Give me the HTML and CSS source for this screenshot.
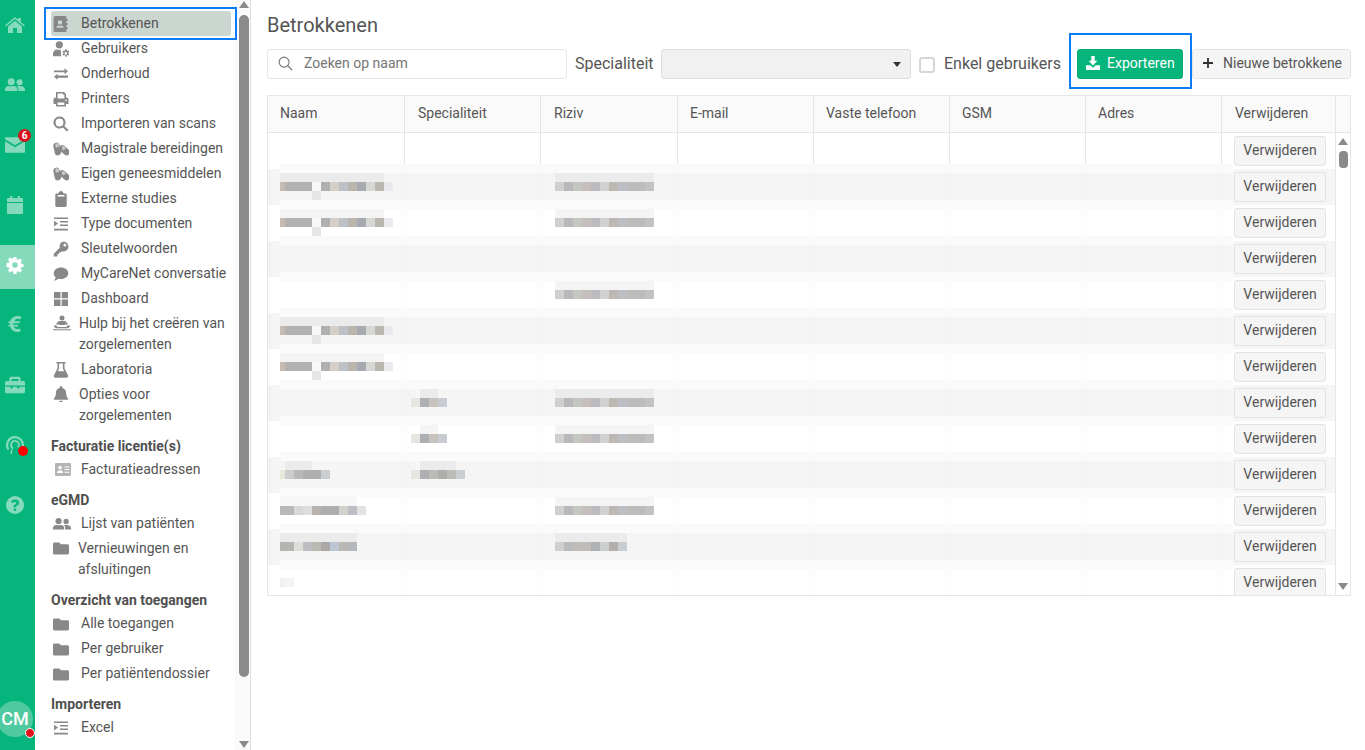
FILE: index.html
```html
<!DOCTYPE html>
<html lang="nl">
<head>
<meta charset="utf-8">
<title>Betrokkenen</title>
<link rel="stylesheet" href="styles.css">
</head>
<body>
<svg class="sprite" xmlns="http://www.w3.org/2000/svg">
  <symbol id="i-book" viewBox="0 0 16 16"><path fill-rule="evenodd" d="M2 0h10a1.5 1.5 0 0 1 1.5 1.5V3h1v2h-1v2h1v2h-1v2h1v2h-1v1.500A1.500 1.500 0 0 1 12 16H2A1.500 1.500 0 0 1 .5 14.500v-13A1.500 1.500 0 0 1 2 0zm5 4.200a2.200 2.200 0 1 0 0 4.400 2.200 2.200 0 0 0 0-4.400zM3.200 11.800h7.600c0-1.500-1.300-2.400-2.300-2.400-.5 0-.8.300-1.500.3s-1-.3-1.500-.3c-1 0-2.300.9-2.300 2.400z"/></symbol>
  <symbol id="i-usercog" viewBox="0 0 16 16"><circle cx="6.300" cy="3.800" r="3.600"/><path d="M0 15.200v-2.200C0 10.500 2 8.600 4.200 8.600c.7 0 1.200.3 2.100.3.600 0 1.100-.1 1.600-.3-.3 1-.2 2 .4 2.800-.6 1-.7 2.800.5 3.800H0z"/><path fill-rule="evenodd" d="M12.500 7.900l1.100.3.100 1.100 1 .6 1-.4.600 1.100-.8.800v1.100l.8.800-.6 1.100-1-.4-1 .6-.1 1.100h-1.300l-.2-1.100-1-.6-1 .4-.6-1.100.8-.8v-1.100l-.8-.8.6-1.100 1 .4 1-.6.2-1.400zm.3 3.200a1.300 1.300 0 1 0 0 2.600 1.300 1.300 0 0 0 0-2.600z"/></symbol>
  <symbol id="i-exchange" viewBox="0 0 16 16"><path d="M1 4.500h10.500V2.300L15 5.300l-3.500 3V6.300H1zM15 9.500H4.500V7.700L1 10.700l3.500 3v-2H15z"/></symbol>
  <symbol id="i-print" viewBox="0 0 16 16"><path fill-rule="evenodd" d="M3 1h8l2 2v3.500h.5A2 2 0 0 1 15.500 8.500V13H13v2.500H3V13H.5V8.500a2 2 0 0 1 2-2H3V1zm1.600 1.600v5h6.800V3.800h-1.300V2.600H4.600zm0 9v2.300h6.800v-2.300H4.600zm8.400-3a.8.8 0 1 0 0 1.600.8.8 0 0 0 0-1.600z"/></symbol>
  <symbol id="i-search" viewBox="0 0 16 16"><path fill-rule="evenodd" d="M6.500 .5a6 6 0 0 1 4.900 9.500l4.100 4-1.500 1.500-4.100-4.100A6 6 0 1 1 6.500 .5zm0 2.100a3.900 3.900 0 1 0 0 7.800 3.900 3.900 0 0 0 0-7.800z"/></symbol>
  <symbol id="i-pills" viewBox="0 0 16 16"><rect x="1" y="1.500" width="6.400" height="13" rx="3.200" transform="rotate(-12 4.200 8)"/><rect x="8.300" y="3.300" width="6.400" height="12" rx="3.200" transform="rotate(-48 11.500 9.300)"/><path d="M2.300 3.800a1.800 1.800 0 0 1 3.300-.7l.6 3-3.400.7z" fill="#fff" opacity=".55"/><path d="M9 5.500a1.800 1.800 0 0 1 2.500.2l1.500 1.600-2.500 2.300L9 8z" fill="#fff" opacity=".55"/></symbol>
  <symbol id="i-clip" viewBox="0 0 16 16"><path d="M5.500 2.400C5.600 1 6.700 0 8 0s2.400 1 2.500 2.400h1.800c.8 0 1.400.6 1.400 1.400v10.800c0 .8-.6 1.400-1.400 1.400H3.700c-.8 0-1.400-.6-1.400-1.400V3.800c0-.8.6-1.400 1.400-1.400zM4.600 4v1.400h6.800V4z"/></symbol>
  <symbol id="i-indent" viewBox="0 0 16 16"><path d="M1 1.500h14v1.600H1zM7 5h8v1.600H7zM7 8.500h8v1.600H7zM1 12.800h14v1.600H1zM1 4.800l3.800 2.800L1 10.400z M4 7.200h1v1H4z"/></symbol>
  <symbol id="i-key" viewBox="0 0 16 16"><path fill-rule="evenodd" d="M10.500 .5a5 5 0 1 1-1.800 9.700l-1.200 1.300H6v1.500H4.500V15L3.700 15.600H.8V12.800l6-6A5 5 0 0 1 10.500 .5zm1.400 2.100a1.500 1.500 0 1 0 0 3 1.500 1.500 0 0 0 0-3z"/></symbol>
  <symbol id="i-comment" viewBox="0 0 16 16"><path d="M8 1.500c4.100 0 7.300 2.600 7.300 5.800S12.100 13.100 8 13.100c-1 0-1.900-.1-2.700-.4C4.400 13.500 2.800 14.500.9 14.500c1-1 1.600-2.100 1.800-3.200C1.500 10.300.7 8.900.7 7.300.7 4.100 3.900 1.500 8 1.500z"/></symbol>
  <symbol id="i-grid" viewBox="0 0 16 16"><path d="M1 1h6.500v6.200H1zM8.700 1H15v6.200H8.700zM1 8.600h6.500V15H1zM8.700 8.600H15V15H8.700z"/></symbol>
  <symbol id="i-care" viewBox="0 0 18 16"><circle cx="9" cy="3" r="2.500"/><path d="M5.800 6h6.400l2.800 3-1.200 1-1.600-1.200V10H5.800V8.800L4.200 10 3 9zM1 10.500h2.500l1 1.500h9l1-1.500H17v1.200l-2 1.600H3L1 11.700zM0 14.200h18v1.100H0z"/></symbol>
  <symbol id="i-flask" viewBox="0 0 16 16"><path fill-rule="evenodd" d="M3.500 0h9v1.600h-1v4.600l3.500 7c.5 1.200-.3 2.500-1.600 2.500H2.600c-1.300 0-2.100-1.300-1.600-2.500l3.500-7V1.600h-1zm2.600 1.600v5.100L4.900 9.200h6.200L9.900 6.700V1.600z"/></symbol>
  <symbol id="i-bell" viewBox="0 0 16 16"><path d="M8 0c.7 0 1.100.5 1.100 1.100v.6c2.300.5 4 2.500 4 5 0 3.500 1 4.700 2 5.700.5.600.1 1.400-.7 1.400H1.600c-.8 0-1.200-.8-.7-1.400 1-1 2-2.200 2-5.700 0-2.500 1.700-4.500 4-5v-.6C6.900.5 7.300 0 8 0zM6 14.800h4A2 2 0 0 1 8 16.200a2 2 0 0 1-2-1.400z"/></symbol>
  <symbol id="i-idcard" viewBox="0 0 16 13"><path fill-rule="evenodd" d="M1.200 0h13.600C15.500 0 16 .5 16 1.200v10.600c0 .7-.5 1.200-1.200 1.200H1.200C.5 13 0 12.500 0 11.800V1.200C0 .5.500 0 1.200 0zm3.900 2.800a1.800 1.800 0 1 0 0 3.600 1.800 1.800 0 0 0 0-3.600zM2 10h6.200c0-1.700-1.300-2.800-3.100-2.800S2 8.300 2 10zm7.500-6.500v1h5v-1zm0 2.600v1h5v-1zm0 2.600v1h5v-1z"/></symbol>
  <symbol id="i-users" viewBox="0 0 20 16"><circle cx="6.200" cy="4.800" r="3.500"/><circle cx="14.600" cy="5.200" r="3"/><path d="M0 14v-1.500C0 10.300 1.800 9 3.800 9c.8 0 1.500.3 2.400.3S7.800 9 8.600 9c2.100 0 3.800 1.300 3.800 3.500V14zM13.500 14v-1.500c0-1.300-.5-2.500-1.500-3.300.7-.2 1.300-.2 2.600-.2 3.200 0 5.400 1.400 5.400 3.500V14z"/></symbol>
  <symbol id="i-folder" viewBox="0 0 16 16"><path d="M1.500 2.500h4.700L8 4.200h6.500c.8 0 1.500.7 1.500 1.500v7.300c0 .8-.7 1.500-1.500 1.500h-13C.7 14.500 0 13.800 0 13V4C0 3.200.7 2.500 1.500 2.500z"/></symbol>
</svg>

<nav class="rail">
  <a class="rail-item"><svg class="rail-icon" viewBox="0 0 20 16"><path d="M10 0l3.200 2.700V1h2.600v3.900L20 8.400l-1 1.200-9-7.500-9 7.500-1-1.200zM3 9.600L10 3.800l7 5.800V16h-5v-5H8v5H3z"/></svg></a>
  <a class="rail-item"><svg class="rail-icon" viewBox="0 0 20 16"><use href="#i-users"/></svg></a>
  <a class="rail-item rail-mail"><svg class="rail-icon" viewBox="0 0 18 14"><path d="M.5 0h17c.3 0 .5.200.5.500v1.300L9 7.300 0 1.800V.5C0 .2.200 0 .5 0zM0 3.600l9 5.500 9-5.500V13c0 .6-.4 1-1 1H1c-.6 0-1-.4-1-1z"/></svg><span class="badge">6</span></a>
  <a class="rail-item"><svg class="rail-icon" viewBox="0 0 16 18"><path d="M3 0h2.200v2h5.600V0H13v2h2c.6 0 1 .4 1 1v3H0V3c0-.6.400-1 1-1h2zM0 7h16v10c0 .6-.4 1-1 1H1c-.6 0-1-.4-1-1z"/></svg></a>
  <a class="rail-item active"><svg class="rail-icon" viewBox="0 0 16 16"><path fill-rule="evenodd" d="M6.600 0h2.800l.4 2.200 1.300.6 1.900-1.300 2 2-1.300 1.900.6 1.300 2.200.4v2.800l-2.200.4-.6 1.300 1.300 1.900-2 2-1.900-1.300-1.300.6-.4 2.200H6.600l-.4-2.200-1.300-.6L3 15.500l-2-2 1.300-1.900-.6-1.300L-.5 9.900V6.100l2.200-.4.600-1.300L1 2.500l2-2 1.900 1.300 1.300-.6zM8 5.200a2.800 2.800 0 1 0 0 5.600 2.800 2.800 0 0 0 0-5.600z"/></svg></a>
  <a class="rail-item"><svg class="rail-icon" viewBox="0 0 12 16"><path d="M8.600 0c1 0 2.100.2 2.900.5l-.5 2.400c-.7-.2-1.500-.4-2.300-.4-1.500 0-2.600.7-3.100 2.200h4.900l-.4 1.700H4.300v1.300h4.500l-.4 1.700H4.800c.5 1.500 1.700 2.200 3.200 2.200.9 0 1.800-.2 2.500-.5l.5 2.500c-1 .4-2 .6-3.200.6-3 0-5.400-1.700-6.100-4.800H0l.4-1.700h1.200V6.400H0l.4-1.700h1.400C2.600 1.800 5.200 0 8.600 0z"/></svg></a>
  <a class="rail-item"><svg class="rail-icon" viewBox="0 0 18 15"><path fill-rule="evenodd" d="M5.500 0h7c.8 0 1.500.7 1.500 1.500V4h2.500c.8 0 1.500.7 1.500 1.500V8H0V5.500C0 4.700.7 4 1.500 4H4V1.500C4 .7 4.700 0 5.500 0zM6 2v2h6V2zM0 9h5v1.500h2V9h4v1.500h2V9h5v4.500c0 .8-.7 1.500-1.500 1.500h-15C.7 15 0 14.300 0 13.500z"/></svg></a>
  <a class="rail-item rail-live"><svg class="rail-icon" viewBox="0 0 16 16"><path fill-rule="evenodd" d="M8 0a8 8 0 0 1 8 8c0 1.800-.6 3.400-1.500 4.700l-1.400-1.200c.7-1 1-2.200 1-3.500a6.100 6.100 0 1 0-12.200 0c0 1.300.4 2.500 1 3.500l-1.400 1.200A8 8 0 0 1 8 0zm0 3.600a4.400 4.400 0 0 1 3.500 7l-1.300-1.100a2.700 2.700 0 1 0-3.800.6L5 16 3.500 15.500l1.700-4.200A4.400 4.400 0 0 1 8 3.600z"/></svg><span class="dot"></span></a>
  <a class="rail-item"><svg class="rail-icon" viewBox="0 0 16 16"><path fill-rule="evenodd" d="M8 0a8 8 0 1 1 0 16A8 8 0 0 1 8 0zm.2 3.200c-1.800 0-3 .8-3.800 2l1.500 1.100c.5-.6.900-1 1.900-1 .8 0 1.400.4 1.400 1 0 .5-.4.800-1 1.100-.9.500-1.500 1-1.500 2.100v.4h2.200v-.3c0-.4.300-.7.900-1 1-.5 1.900-1.200 1.900-2.400 0-1.800-1.800-3-2.500-3zM8 11a1.200 1.200 0 1 0 0 2.400A1.200 1.200 0 0 0 8 11z"/></svg></a>
  <div class="avatar">CM<span class="avatar-dot"></span></div>
</nav>

<aside class="side">
  <div class="menu">
    <a class="item selected"><svg class="ic"><use href="#i-book"/></svg><span>Betrokkenen</span></a>
    <a class="item"><svg class="ic"><use href="#i-usercog"/></svg><span>Gebruikers</span></a>
    <a class="item"><svg class="ic"><use href="#i-exchange"/></svg><span>Onderhoud</span></a>
    <a class="item"><svg class="ic"><use href="#i-print"/></svg><span>Printers</span></a>
    <a class="item"><svg class="ic"><use href="#i-search"/></svg><span>Importeren van scans</span></a>
    <a class="item"><svg class="ic"><use href="#i-pills"/></svg><span>Magistrale bereidingen</span></a>
    <a class="item"><svg class="ic"><use href="#i-pills"/></svg><span>Eigen geneesmiddelen</span></a>
    <a class="item"><svg class="ic"><use href="#i-clip"/></svg><span>Externe studies</span></a>
    <a class="item"><svg class="ic"><use href="#i-indent"/></svg><span>Type documenten</span></a>
    <a class="item"><svg class="ic"><use href="#i-key"/></svg><span>Sleutelwoorden</span></a>
    <a class="item"><svg class="ic"><use href="#i-comment"/></svg><span>MyCareNet conversatie</span></a>
    <a class="item"><svg class="ic"><use href="#i-grid"/></svg><span>Dashboard</span></a>
    <a class="item two"><svg class="ic ic-wide"><use href="#i-care"/></svg><span>Hulp bij het creëren van zorgelementen</span></a>
    <a class="item"><svg class="ic"><use href="#i-flask"/></svg><span>Laboratoria</span></a>
    <a class="item two"><svg class="ic"><use href="#i-bell"/></svg><span>Opties voor zorgelementen</span></a>
    <h3 class="group">Facturatie licentie(s)</h3>
    <a class="item"><svg class="ic ic-card"><use href="#i-idcard"/></svg><span>Facturatieadressen</span></a>
    <h3 class="group">eGMD</h3>
    <a class="item"><svg class="ic ic-wide"><use href="#i-users"/></svg><span>Lijst van patiënten</span></a>
    <a class="item two two-tight"><svg class="ic"><use href="#i-folder"/></svg><span>Vernieuwingen en afsluitingen</span></a>
    <h3 class="group">Overzicht van toegangen</h3>
    <a class="item"><svg class="ic"><use href="#i-folder"/></svg><span>Alle toegangen</span></a>
    <a class="item"><svg class="ic"><use href="#i-folder"/></svg><span>Per gebruiker</span></a>
    <a class="item"><svg class="ic"><use href="#i-folder"/></svg><span>Per patiëntendossier</span></a>
    <h3 class="group">Importeren</h3>
    <a class="item"><svg class="ic"><use href="#i-indent"/></svg><span>Excel</span></a>
  </div>
  <div class="side-scroll">
    <i class="arrow-up"></i>
    <i class="side-thumb"></i>
    <i class="arrow-down"></i>
  </div>
</aside>

<main class="main">
  <h1 class="title">Betrokkenen</h1>
  <div class="toolbar">
    <label class="search">
      <svg class="search-ic" viewBox="0 0 16 16"><circle cx="6.500" cy="6.500" r="5.300"/><path d="M10.400 10.400l4.800 4.800"/></svg>
      <span>Zoeken op naam</span>
    </label>
    <span class="lbl lbl-spec">Specialiteit</span>
    <div class="select"><i class="caret"></i></div>
    <i class="check"></i>
    <span class="lbl lbl-check">Enkel gebruikers</span>
    <button class="btn-export"><svg class="btn-ic" viewBox="0 0 16 16"><path d="M6 0h4v5.500h3L8 10.800 3 5.500h3zM0 10.500h4.800L8 13.500l3.200-3H16V16H0z"/></svg>Exporteren</button>
    <button class="btn-new"><svg class="plus-ic" viewBox="0 0 10 10"><path d="M4.100 0h1.800v4.100H10v1.800H5.900V10H4.100V5.900H0V4.100h4.100z"/></svg>Nieuwe betrokkene</button>
  </div>

  <section class="table">
    <div class="thead">
      <div class="th">Naam</div>
      <div class="th th-in">Specialiteit</div>
      <div class="th th-in">Riziv</div>
      <div class="th">E-mail</div>
      <div class="th">Vaste telefoon</div>
      <div class="th">GSM</div>
      <div class="th">Adres</div>
      <div class="th th-in th-last">Verwijderen</div>
      <div class="th th-end"></div>
    </div>
    <div class="tbody">
      <div class="rows">
        <div class="row row-first"><div class="c"></div><div class="c"></div><div class="c"></div><div class="c"></div><div class="c"></div><div class="c"></div><div class="c"></div><div class="c-btn"><button class="del">Verwijderen</button></div></div>
        <div class="row grey"><div><i class="mos n113"></i></div><div></div><div><i class="mos rz99"></i></div><div></div><div></div><div></div><div></div><div class="c-btn"><button class="del">Verwijderen</button></div></div>
        <div class="row"><div><i class="mos n113"></i></div><div></div><div><i class="mos rz99"></i></div><div></div><div></div><div></div><div></div><div class="c-btn"><button class="del">Verwijderen</button></div></div>
        <div class="row grey"><div></div><div></div><div></div><div></div><div></div><div></div><div></div><div class="c-btn"><button class="del">Verwijderen</button></div></div>
        <div class="row"><div></div><div></div><div><i class="mos rz99"></i></div><div></div><div></div><div></div><div></div><div class="c-btn"><button class="del">Verwijderen</button></div></div>
        <div class="row grey"><div><i class="mos n113"></i></div><div></div><div></div><div></div><div></div><div></div><div></div><div class="c-btn"><button class="del">Verwijderen</button></div></div>
        <div class="row"><div><i class="mos n113"></i></div><div></div><div></div><div></div><div></div><div></div><div></div><div class="c-btn"><button class="del">Verwijderen</button></div></div>
        <div class="row grey"><div></div><div><i class="mos sp36"></i></div><div><i class="mos rz99"></i></div><div></div><div></div><div></div><div></div><div class="c-btn"><button class="del">Verwijderen</button></div></div>
        <div class="row"><div></div><div><i class="mos sp36"></i></div><div><i class="mos rz99"></i></div><div></div><div></div><div></div><div></div><div class="c-btn"><button class="del">Verwijderen</button></div></div>
        <div class="row grey"><div><i class="mos n50"></i></div><div><i class="mos sp54"></i></div><div></div><div></div><div></div><div></div><div></div><div class="c-btn"><button class="del">Verwijderen</button></div></div>
        <div class="row"><div><i class="mos n86"></i></div><div></div><div><i class="mos rz99"></i></div><div></div><div></div><div></div><div></div><div class="c-btn"><button class="del">Verwijderen</button></div></div>
        <div class="row grey"><div><i class="mos n77"></i></div><div></div><div><i class="mos rz72"></i></div><div></div><div></div><div></div><div></div><div class="c-btn"><button class="del">Verwijderen</button></div></div>
        <div class="row"><div><i class="mos tiny"></i></div><div></div><div></div><div></div><div></div><div></div><div></div><div class="c-btn"><button class="del">Verwijderen</button></div></div>
      </div>
      <div class="table-scroll">
        <i class="arrow-up small"></i>
        <i class="table-thumb"></i>
        <i class="arrow-down small"></i>
      </div>
    </div>
  </section>
</main>
</body>
</html>
```

FILE: styles.css
```css
* { box-sizing: border-box; }
html, body { margin: 0; height: 750px; overflow: hidden; }
body {
  display: flex;
  font-family: Roboto, "Liberation Sans", sans-serif;
  font-size: 14px;
  color: #555;
  background: #fff;
}
.sprite { display: none; }

/* left rail */
.rail {
  width: 35px;
  flex: none;
  height: 750px;
  background: #06b57c;
  display: flex;
  flex-direction: column;
  gap: 16px;
  padding-top: 5px;
  overflow: hidden;
}
.rail-item {
  position: relative;
  height: 44px;
  flex: none;
  display: flex;
  justify-content: center;
  padding: 11px 5px 0 0;
}
.rail-item.active { background: #86dabc; }
.rail-icon { width: 20px; height: 18px; fill: #86dabc; overflow: visible; }
.active .rail-icon { fill: #fff; width: 16px; height: 16px; margin-top: 1px; }
.badge {
  position: absolute;
  left: 18px;
  top: 4px;
  width: 13px;
  height: 13px;
  border-radius: 50%;
  background: #d9141f;
  color: #fff;
  font-size: 10px;
  font-weight: 700;
  line-height: 13px;
  text-align: center;
}
.dot {
  position: absolute;
  left: 18px;
  top: 21px;
  width: 10px;
  height: 10px;
  border-radius: 50%;
  background: #f00;
}
.avatar {
  position: relative;
  flex: none;
  width: 36px;
  height: 36px;
  margin: auto 0 13px -3px;
  border-radius: 50%;
  background: #4fc9a0;
  color: #fff;
  font-size: 18px;
  font-weight: 500;
  line-height: 36px;
  text-align: center;
}
.avatar-dot {
  position: absolute;
  left: 28px;
  top: 27px;
  width: 10px;
  height: 10px;
  border-radius: 50%;
  background: #e0101f;
  border: 1px solid #fff;
}

/* sidebar */
.side {
  width: 216px;
  flex: none;
  height: 750px;
  display: flex;
  border-right: 1px solid #d6e2dd;
}
.menu {
  width: 200px;
  flex: none;
  padding: 11px 4px 0 16px;
}
.item {
  position: relative;
  display: flex;
  align-items: center;
  min-height: 25px;
  line-height: 21px;
  padding-left: 2px;
  border-radius: 3px;
}
.item .ic {
  width: 16px;
  height: 16px;
  flex: none;
  margin-right: 12px;
  fill: #888;
}
.item .ic-wide { width: 18px; margin-right: 10px; }
.item .ic-card { fill: #b4b4b4; margin-left: 2px; height: 13px; margin-right: 10px; }
.item.two { align-items: flex-start; padding-top: 2px; padding-bottom: 2px; margin-right: 0; }
.item.two .ic { margin-top: 2px; margin-right: 10px; }
.item.two .ic-wide { margin-right: 8px; }
.item.two-tight .ic { margin-right: 9px; }
.selected { background: #ccd6d0; }
.selected::after {
  content: "";
  position: absolute;
  left: -7px;
  right: -6px;
  top: -4px;
  bottom: -4px;
  border: 2px solid #0a7cf5;
  pointer-events: none;
}
.group {
  margin: 0;
  padding-top: 8px;
  font-size: 14px;
  line-height: 21px;
  font-weight: 700;
  color: #505050;
}
.side-scroll {
  width: 15px;
  flex: none;
  background: #fafafa;
  display: flex;
  flex-direction: column;
  align-items: center;
  padding: 1px 0 0 2px;
}
.arrow-up, .arrow-down {
  display: block;
  width: 0;
  height: 0;
  flex: none;
  border-left: 5px solid transparent;
  border-right: 5px solid transparent;
}
.arrow-up { border-bottom: 7px solid #8a8a8a; }
.arrow-down { border-top: 7px solid #8a8a8a; margin-top: auto; margin-bottom: 2px; }
.side-thumb {
  display: block;
  width: 10px;
  height: 662px;
  margin-top: 7px;
  border-radius: 5px;
  background: #8a8a8a;
}

/* main */
.main { flex: 1; padding: 11px 14px 0 16px; min-width: 0; }
.title {
  margin: 0 0 10px;
  font-size: 20px;
  font-weight: 400;
  line-height: 28px;
  color: #555;
}
.toolbar {
  display: flex;
  align-items: center;
  height: 30px;
  margin-bottom: 16px;
}
.search {
  width: 300px;
  height: 30px;
  flex: none;
  display: flex;
  align-items: center;
  padding: 0 0 2px 10px;
  border: 1px solid #e6e6e6;
  border-radius: 3px;
  color: #757575;
}
.search-ic {
  width: 15px;
  height: 15px;
  margin-right: 11px;
  fill: none;
  stroke: #777;
  stroke-width: 1.2;
}
.lbl { font-size: 16px; line-height: 20px; color: #555; white-space: nowrap; }
.lbl-spec { margin-left: 8px; width: 78px; }
.lbl-check { width: 117px; }
.select {
  position: relative;
  width: 250px;
  height: 30px;
  flex: none;
  margin-left: 8px;
  background: #f1f1f1;
  border: 1px solid #ddd;
  border-radius: 3px;
}
.caret {
  position: absolute;
  right: 9px;
  top: 12px;
  border-left: 4px solid transparent;
  border-right: 4px solid transparent;
  border-top: 5px solid #333;
}
.check {
  display: block;
  width: 16px;
  height: 16px;
  flex: none;
  margin: 1px 9px 0 8px;
  border: 2px solid #d6d6d6;
  border-radius: 3px;
  background: #fff;
}
.btn-export, .btn-new {
  height: 30px;
  flex: none;
  font-family: inherit;
  font-size: 14px;
  border-radius: 3px;
  display: flex;
  align-items: center;
  padding: 0 0 2px;
}
.btn-export {
  position: relative;
  width: 106px;
  margin-left: 16px;
  padding-left: 8px;
  background: #06b57c;
  color: #fff;
  border: 1px solid #07a874;
}
.btn-export::after {
  content: "";
  position: absolute;
  left: -9px;
  right: -10px;
  top: -17px;
  bottom: -11px;
  border: 2px solid #0a7cf5;
  pointer-events: none;
}
.btn-ic { width: 14px; height: 14px; fill: #fff; margin-right: 7px; }
.btn-new {
  width: 159px;
  margin-left: 9px;
  padding-left: 10px;
  background: #f5f5f5;
  color: #555;
  border: 1px solid #e3e3e3;
}
.plus-ic { width: 10px; height: 10px; fill: #333; margin-right: 10px; }

/* table */
.table {
  width: 1084px;
  border: 1px solid #e6e6e6;
}
.thead, .row {
  display: grid;
  grid-template-columns: 137px 136px 137px 136px 136px 136px 136px 113px;
}
.thead {
  grid-template-columns: 137px 136px 137px 136px 136px 136px 136px 113px 1fr;
  height: 37px;
  background: #fafafa;
  border-bottom: 1px solid #e6e6e6;
}
.th {
  padding-left: 12px;
  line-height: 35px;
  border-right: 1px solid #e6e6e6;
  color: #555;
}
.th-in { padding-left: 13px; }
.th-last { border-right: 0; }
.th-end { padding: 0; border-right: 0; border-left: 1px solid #e6e6e6; }
.tbody { display: flex; height: 462px; overflow: hidden; }
.rows { width: 1067px; flex: none; }
.row {
  height: 36px;
  --t: #f4f4f4;
  background-color: #fff;
  background-image:
    linear-gradient(#fafafa, #fafafa),
    linear-gradient(#fafafa, #fafafa),
    linear-gradient(90deg, transparent 127px, rgba(0, 0, 0, .008) 127px);
  background-repeat: no-repeat, no-repeat, repeat-x;
  background-position: 12px 0, 12px 100%, 141px 0;
  background-size: 953px 4px, 953px 5px, 136px 100%;
}
.row.grey { background-color: #f5f5f5; --t: #ebebeb; }
.row-first { background-position: 12px -9px, 12px 100%, 141px 0; background-size: 953px 4px, 953px 5px, 0 0; }
.c { border-right: 1px solid #e6e6e6; margin-bottom: 5px; }
.c-btn { padding: 3px 0 0 12px; }
.del {
  display: block;
  width: 92px;
  height: 30px;
  padding: 0 0 2px;
  font-family: inherit;
  font-size: 14px;
  color: #555;
  background: #f5f5f5;
  border: 1px solid #e3e3e3;
  border-radius: 3px;
}
.table-scroll {
  flex: 1;
  border-left: 1px solid #e6e6e6;
  background: #fff;
  display: flex;
  flex-direction: column;
  align-items: center;
  padding-top: 5px;
}
.table-thumb {
  display: block;
  width: 9px;
  height: 17px;
  margin-top: 6px;
  border-radius: 4px;
  background: #8a8a8a;
}
.small { border-left-width: 5px; border-right-width: 5px; }
.arrow-down.small { margin-bottom: 5px; }

/* blurred (anonymised) cell contents */
.mos {
  display: block;
  height: 27px;
  margin-top: 4px;
  background-repeat: no-repeat;
}
.n113 {
  width: 113px;
  margin-left: 12px;
  background-image:
    linear-gradient(var(--t), var(--t)),
    linear-gradient(90deg, #c5bbb2 0 5px, #b2b2b2 5px 32px, #f8f8f6 32px 41px, #b0b0b2 41px 50px, #d6cfc8 50px 59px, #bdc0c5 59px 68px, #bcb5ae 68px 77px, #a8aab2 77px 86px, #d6d8d6 86px 95px, #bab6b0 95px 104px, #e8eaee 104px 113px),
    linear-gradient(#e6e6e6, #e6e6e6);
  background-position: 0 0, 0 9px, 32px 18px;
  background-size: 104px 9px, 113px 9px, 9px 9px;
}
.rz99 {
  width: 99px;
  margin-left: 14px;
  background-image:
    linear-gradient(var(--t), var(--t)),
    linear-gradient(90deg, #cfcfcf 0 9px, #b6b8ba 9px 18px, #c6c6c0 18px 27px, #c6bebc 27px 36px, #babcc0 36px 45px, #cfd1d3 45px 54px, #bdb8b2 54px 63px, #bcbec4 63px 72px, #bcbcbc 72px 90px, #c0c2c4 90px 99px);
  background-position: 0 0, 0 9px;
  background-size: 99px 9px, 99px 9px;
}
.rz72 {
  width: 72px;
  margin-left: 14px;
  background-image:
    linear-gradient(var(--t), var(--t)),
    linear-gradient(90deg, #d0d0ce 0 9px, #b8bcbc 9px 18px, #c0bcb8 18px 36px, #aeb2b4 36px 45px, #ccd0cc 45px 54px, #b2aeaa 54px 63px, #c8ced2 63px 72px);
  background-position: 0 0, 0 9px;
  background-size: 72px 9px, 72px 9px;
}
.sp36 {
  width: 36px;
  margin-left: 6px;
  background-image:
    linear-gradient(var(--t), var(--t)),
    linear-gradient(90deg, #e8e6e0 0 9px, #adafb0 9px 18px, #c8c2bc 18px 27px, #c8ccd2 27px 36px);
  background-position: 9px 0, 0 9px;
  background-size: 18px 9px, 36px 9px;
}
.sp54 {
  width: 54px;
  margin-left: 6px;
  background-image:
    linear-gradient(var(--t), var(--t)),
    linear-gradient(90deg, #e8e6e0 0 9px, #adafb0 9px 18px, #bbbbb8 18px 27px, #aeaeac 27px 36px, #bdbdb8 36px 45px, #c8ced2 45px 54px);
  background-position: 9px 0, 0 9px;
  background-size: 36px 9px, 54px 9px;
}
.n50 {
  width: 50px;
  margin-left: 12px;
  background-image:
    linear-gradient(var(--t), var(--t)),
    linear-gradient(90deg, #e8e8d8 0 5px, #cccccc 5px 14px, #b8bab8 14px 23px, #b0aeae 23px 41px, #c8ced2 41px 50px);
  background-position: 5px 0, 0 9px;
  background-size: 27px 9px, 50px 9px;
}
.n86 {
  width: 86px;
  margin-left: 12px;
  background-image:
    linear-gradient(#f7f7f7, #f7f7f7),
    linear-gradient(90deg, #b8bab8 0 14px, #d8d8d6 14px 23px, #dcdee0 23px 32px, #b8b2ae 32px 41px, #aeaeae 41px 59px, #d0d2cc 59px 68px, #c0bcc6 68px 77px, #e0e2e4 77px 86px);
  background-position: 0 0, 0 9px;
  background-size: 77px 9px, 86px 9px;
}
.n77 {
  width: 77px;
  margin-left: 12px;
  background-image:
    linear-gradient(var(--t), var(--t)),
    linear-gradient(90deg, #b4b4b0 0 14px, #e0ded8 14px 23px, #bcbec4 23px 32px, #babcb4 32px 41px, #aca6a6 41px 50px, #bcc6d2 50px 59px, #bab8b4 59px 68px, #b4b8bc 68px 77px);
  background-position: 0 0, 0 9px;
  background-size: 77px 9px, 77px 9px;
}
.tiny {
  width: 14px;
  height: 9px;
  margin: 13px 0 0 12px;
  background: linear-gradient(90deg, #f0f0f0 0 5px, #f4f4f4 5px 14px);
}
```
